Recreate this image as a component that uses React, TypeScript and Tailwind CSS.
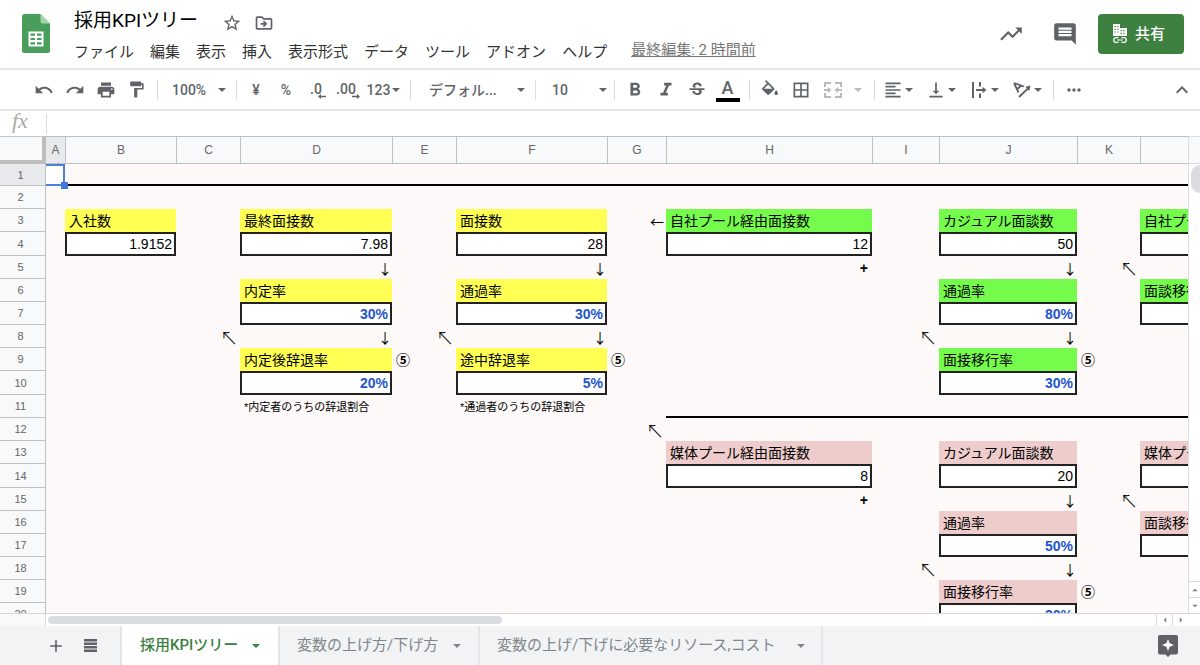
import type { ReactNode } from 'react';
import { clsx } from 'clsx';
import {
    MdAdd,
    MdBorderAll,
    MdExpandLess,
    MdFormatAlignLeft,
    MdFormatBold,
    MdFormatItalic,
    MdFormatPaint,
    MdInsertComment,
    MdMoreHoriz,
    MdOutlineDriveFileMove,
    MdPrint,
    MdRedo,
    MdStarBorder,
    MdStrikethroughS,
    MdTrendingUp,
    MdUndo,
    MdVerticalAlignBottom,
} from 'react-icons/md';

type Kind = 'yellow' | 'green' | 'pink' | 'value' | 'rate' | 'down' | 'left' | 'diagonal' | 'plus' | 'badge' | 'note';

interface Cell {
    text: string;
    kind: Kind;
}

const MENUS = ['ファイル', '編集', '表示', '挿入', '表示形式', 'データ', 'ツール', 'アドオン', 'ヘルプ'];

const COLUMNS = [
    { name: 'A', width: 'w-[19px]' },
    { name: 'B', width: 'w-[111px]' },
    { name: 'C', width: 'w-[64px]' },
    { name: 'D', width: 'w-[152px]' },
    { name: 'E', width: 'w-[64px]' },
    { name: 'F', width: 'w-[151px]' },
    { name: 'G', width: 'w-[59px]' },
    { name: 'H', width: 'w-[206px]' },
    { name: 'I', width: 'w-[67px]' },
    { name: 'J', width: 'w-[138px]' },
    { name: 'K', width: 'w-[63px]' },
    { name: 'L', width: 'w-[206px]' },
];

const ROWS = Array.from({ length: 20 }, (_, i) => i + 1);
const TALL_ROWS = [4, 10, 14];

const CELLS: Record<string, Cell> = {
    B3: { text: '入社数', kind: 'yellow' },
    B4: { text: '1.9152', kind: 'value' },
    D3: { text: '最終面接数', kind: 'yellow' },
    D4: { text: '7.98', kind: 'value' },
    D5: { text: '↓', kind: 'down' },
    D6: { text: '内定率', kind: 'yellow' },
    D7: { text: '30%', kind: 'rate' },
    C8: { text: '↖', kind: 'diagonal' },
    D8: { text: '↓', kind: 'down' },
    D9: { text: '内定後辞退率', kind: 'yellow' },
    E9: { text: '⑤', kind: 'badge' },
    D10: { text: '20%', kind: 'rate' },
    D11: { text: '*内定者のうちの辞退割合', kind: 'note' },
    F3: { text: '面接数', kind: 'yellow' },
    F4: { text: '28', kind: 'value' },
    F5: { text: '↓', kind: 'down' },
    F6: { text: '通過率', kind: 'yellow' },
    F7: { text: '30%', kind: 'rate' },
    E8: { text: '↖', kind: 'diagonal' },
    F8: { text: '↓', kind: 'down' },
    F9: { text: '途中辞退率', kind: 'yellow' },
    G9: { text: '⑤', kind: 'badge' },
    F10: { text: '5%', kind: 'rate' },
    F11: { text: '*通過者のうちの辞退割合', kind: 'note' },
    G3: { text: '←', kind: 'left' },
    H3: { text: '自社プール経由面接数', kind: 'green' },
    H4: { text: '12', kind: 'value' },
    H5: { text: '+', kind: 'plus' },
    J3: { text: 'カジュアル面談数', kind: 'green' },
    J4: { text: '50', kind: 'value' },
    J5: { text: '↓', kind: 'down' },
    J6: { text: '通過率', kind: 'green' },
    J7: { text: '80%', kind: 'rate' },
    I8: { text: '↖', kind: 'diagonal' },
    J8: { text: '↓', kind: 'down' },
    J9: { text: '面接移行率', kind: 'green' },
    K9: { text: '⑤', kind: 'badge' },
    J10: { text: '30%', kind: 'rate' },
    L3: { text: '自社プール経由面談数', kind: 'green' },
    L4: { text: '', kind: 'value' },
    K5: { text: '↖', kind: 'diagonal' },
    L6: { text: '面談移行率', kind: 'green' },
    L7: { text: '', kind: 'rate' },
    G12: { text: '↖', kind: 'diagonal' },
    H13: { text: '媒体プール経由面接数', kind: 'pink' },
    H14: { text: '8', kind: 'value' },
    H15: { text: '+', kind: 'plus' },
    J13: { text: 'カジュアル面談数', kind: 'pink' },
    J14: { text: '20', kind: 'value' },
    J15: { text: '↓', kind: 'down' },
    J16: { text: '通過率', kind: 'pink' },
    J17: { text: '50%', kind: 'rate' },
    I18: { text: '↖', kind: 'diagonal' },
    J18: { text: '↓', kind: 'down' },
    J19: { text: '面接移行率', kind: 'pink' },
    K19: { text: '⑤', kind: 'badge' },
    J20: { text: '30%', kind: 'rate' },
    L13: { text: '媒体プール経由面談数', kind: 'pink' },
    L14: { text: '', kind: 'value' },
    K15: { text: '↖', kind: 'diagonal' },
    L16: { text: '面談移行率', kind: 'pink' },
    L17: { text: '', kind: 'rate' },
};

const KIND_STYLES: Record<Kind, string> = {
    yellow: 'bg-[#ffff54] pl-1',
    green: 'bg-[#75fb4c] pl-1',
    pink: 'bg-[#eecccb] pl-1',
    value: 'bg-white border-2 border-[#222] pr-[2px] text-right',
    rate: 'bg-white border-2 border-[#222] pr-[2px] text-right font-bold text-[#1f55cc]',
    down: "text-right font-['Noto_Sans_CJK_JP',sans-serif]",
    left: "pr-[2px] text-right font-['Noto_Sans_CJK_JP',sans-serif]",
    diagonal: "pr-[2px] text-right font-['Noto_Sans_CJK_JP',sans-serif] text-lg font-light leading-4",
    plus: 'pr-1 text-right font-bold',
    badge: 'pl-1 font-bold',
    note: 'pl-1 text-[11px]',
};

const Caret = ({ className = '' }: { className?: string }) => (
    <svg viewBox="0 0 8 4" className={clsx('h-1 w-2 shrink-0 fill-current', className)} aria-hidden="true">
        <path d="M0 0h8L4 4z" />
    </svg>
);

const Separator = ({ className = '' }: { className?: string }) => (
    <div className={clsx('h-5 w-px shrink-0 bg-[#dadce0]', className)} />
);

interface ToolProps {
    label: string;
    className?: string;
    children: ReactNode;
}

const Tool = ({ label, className = 'w-[31px]', children }: ToolProps) => (
    <button
        type="button"
        aria-label={label}
        title={label}
        className={clsx('flex h-7 shrink-0 items-center justify-center', className)}
    >
        {children}
    </button>
);

const MenuTool = ({ label, children }: { label: string; children: ReactNode }) => (
    <button type="button" aria-label={label} title={label} className="flex h-7 w-[43px] shrink-0 items-center">
        <span className="flex w-7 justify-end">
            <span className="flex w-6 justify-center">{children}</span>
        </span>
        <Caret />
    </button>
);

interface ToolSelectProps {
    label: string;
    value: string;
    className: string;
}

const ToolSelect = ({ label, value, className }: ToolSelectProps) => (
    <label className={clsx('flex shrink-0 items-center', className)}>
        <select aria-label={label} defaultValue={value} className="min-w-0 flex-1 appearance-none bg-transparent font-medium outline-none">
            <option>{value}</option>
        </select>
        <Caret />
    </label>
);

const SheetsLogo = () => (
    <svg viewBox="0 0 28 39" className="h-[39px] w-7 shrink-0" role="img" aria-label="スプレッドシート">
        <path d="M2.500 0H18.500L28 9.500V36.500A2.500 2.500 0 0 1 25.500 39H2.500A2.500 2.500 0 0 1 0 36.500V2.500A2.500 2.500 0 0 1 2.500 0z" fill="#4a9e5c" />
        <path d="M18.500 0L28 9.500H20.500a2 2 0 0 1-2-2z" fill="#a5d3ae" />
        <path d="M6.500 17.500h15v15h-15z" fill="#fff" />
        <path d="M8.500 19.500h4.500v2.200h-4.500zM15 19.500h4.500v2.200h-4.500zM8.500 23.900h4.500v2.200h-4.500zM15 23.900h4.500v2.200h-4.500zM8.500 28.300h4.500v2.200h-4.500zM15 28.300h4.500v2.200h-4.500z" fill="#4a9e5c" />
    </svg>
);

const ShareIcon = () => (
    <svg viewBox="0 0 16 20" className="h-5 w-4" aria-hidden="true">
        <path d="M1 0h7v4h7v8H1z" fill="#fff" />
        <path d="M2.500 2h1.200v1.200H2.500zM5.300 2h1.200v1.200H5.300zM2.500 4.700h1.200v1.200H2.500zM5.300 4.700h1.200v1.200H5.300zM2.500 7.400h1.200v1.200H2.500zM5.300 7.400h1.200v1.200H5.300zM8.500 6h1.200v1.200H8.500zM11.300 6h1.200v1.200h-1.200zM8.500 8.700h1.200v1.200H8.500zM11.300 8.700h1.200v1.200h-1.200z" fill="#3d8040" />
        <path d="M6.500 13.700H4a2.300 2.300 0 0 0 0 4.600h2.500M9.500 13.700H12a2.300 2.300 0 0 1 0 4.600H9.500M5 16h6" fill="none" stroke="#fff" strokeWidth="1.200" />
    </svg>
);

const FillIcon = () => (
    <svg viewBox="3 0 18 17" className="h-[15px] w-4 fill-current" aria-hidden="true">
        <path d="M16.560 8.940L7.620 0 6.210 1.410l2.380 2.380-5.150 5.150a1.490 1.490 0 0 0 0 2.120l5.500 5.500c.29.29.68.44 1.060.44s.77-.15 1.060-.44l5.500-5.500c.59-.58.59-1.530 0-2.120zM5.210 10L10 5.210 14.790 10H5.210zM19 11.500s-2 2.170-2 3.500c0 1.100.9 2 2 2s2-.9 2-2c0-1.330-2-3.500-2-3.500z" />
    </svg>
);

const MergeIcon = () => (
    <svg viewBox="0 0 18 16" className="h-4 w-[18px]" fill="none" stroke="currentColor" strokeWidth="2" aria-hidden="true">
        <path d="M1 5V1h6M11 1h6v4M1 11v4h6M11 15h6v-4M0 8h5M18 8h-5" />
        <path d="M4 5l3.500 3L4 11zM14 5l-3.500 3 3.500 3z" fill="currentColor" stroke="none" />
    </svg>
);

const WrapIcon = () => (
    <svg viewBox="0 0 16 16" className="h-4 w-4" fill="none" stroke="currentColor" strokeWidth="2" aria-hidden="true">
        <path d="M2 0v16M9 0v4.500M9 11.500v4.500M5 8h8" />
        <path d="M11.500 4.800L15.500 8l-4 3.200z" fill="currentColor" stroke="none" />
    </svg>
);

const RotateIcon = () => (
    <svg viewBox="0 0 18 16" className="h-4 w-[18px]" fill="none" stroke="currentColor" strokeWidth="1.800" aria-hidden="true">
        <path d="M1 1l10 3.500M1 1l4.500 9.500M8.300 3.500L3.800 7.500M6 15l9-8.500" />
        <path d="M17.500 3.500l-5.200 1.200 4 4.300z" fill="currentColor" stroke="none" />
    </svg>
);

const DecimalIcon = ({ digits, increase = false }: { digits: string; increase?: boolean }) => (
    <span className="flex flex-col items-center text-sm font-medium leading-4">
        {digits}
        <svg
            viewBox="0 0 8 5"
            className={clsx('-mt-[3px] -mr-1 h-[5px] w-2 self-end', increase && 'rotate-180')}
            aria-hidden="true"
        >
            <path d="M0 2.500L3 0v1.700h5v1.600H3V5z" fill="currentColor" />
        </svg>
    </span>
);

const TitleBar = () => (
    <header className="flex h-[70px] shrink-0 items-start border-b-2 border-[#e6e7ea] pl-[22px] pr-4 pt-[14px]">
        <SheetsLogo />
        <div className="-mt-[7px] ml-6">
            <div className="flex h-7 items-center">
                <h1 className="text-[19px] leading-7 text-black">採用KPIツリー</h1>
                <button type="button" aria-label="スターを付ける" className="ml-6 mt-1">
                    <MdStarBorder className="size-5" />
                </button>
                <button type="button" aria-label="移動" className="ml-3 mt-1">
                    <MdOutlineDriveFileMove className="size-5" />
                </button>
            </div>
            <nav className="mt-[5px] flex gap-4 whitespace-nowrap text-[15px] leading-6 text-[#333]">
                {MENUS.map((menu) => (
                    <button key={menu} type="button">
                        {menu}
                    </button>
                ))}
                <a href="#history" className="-mt-[2px] ml-2 text-[#777] underline">
                    最終編集: 2 時間前
                </a>
            </nav>
        </div>
        <div className="ml-auto flex h-10 items-center">
            <button type="button" aria-label="アクティビティ">
                <MdTrendingUp className="size-[26px]" />
            </button>
            <button type="button" aria-label="コメント" className="ml-7">
                <MdInsertComment className="size-[26px]" />
            </button>
            <button
                type="button"
                className="ml-5 flex h-10 w-[86px] items-center gap-[7px] rounded-sm bg-[#3d8040] pl-[14px] text-[15px] font-medium text-white"
            >
                <ShareIcon />
                共有
            </button>
        </div>
    </header>
);

const Toolbar = () => (
    <div className="flex h-[41px] shrink-0 items-center border-b-2 border-[#e6e7ea] pl-7 pr-[3px] text-sm">
        <Tool label="元に戻す"><MdUndo className="size-5" /></Tool>
        <Tool label="やり直し"><MdRedo className="size-5" /></Tool>
        <Tool label="印刷"><MdPrint className="size-5" /></Tool>
        <Tool label="書式を貼り付け"><MdFormatPaint className="size-[19px]" /></Tool>
        <Separator className="ml-[5px]" />
        <ToolSelect label="ズーム" value="100%" className="w-[78px] pl-[14px] pr-[10px]" />
        <Separator />
        <Tool label="通貨" className="ml-1 w-[30px] font-medium">¥</Tool>
        <Tool label="パーセント" className="w-[30px] font-medium">%</Tool>
        <Tool label="小数点以下の桁数を減らす" className="w-[30px]"><DecimalIcon digits=".0" /></Tool>
        <Tool label="小数点以下の桁数を増やす" className="w-[30px]"><DecimalIcon digits=".00" increase /></Tool>
        <Tool label="表示形式の詳細" className="w-[45px] gap-[2px] font-medium">123<Caret /></Tool>
        <Separator className="ml-1" />
        <ToolSelect label="フォント" value="デフォル..." className="w-[124px] pl-[18px] pr-[10px]" />
        <Separator />
        <ToolSelect label="フォントサイズ" value="10" className="w-[78px] pl-4 pr-[7px]" />
        <Separator />
        <Tool label="太字" className="ml-1 w-[31px]"><MdFormatBold className="size-[22px]" /></Tool>
        <Tool label="斜体"><MdFormatItalic className="size-[22px]" /></Tool>
        <Tool label="取り消し線"><MdStrikethroughS className="size-5" /></Tool>
        <Tool label="テキストの色">
            <span className="flex flex-col items-center text-lg font-medium leading-5">
                A
                <span className="h-1 w-6 bg-black" />
            </span>
        </Tool>
        <Separator className="ml-[6px]" />
        <Tool label="塗りつぶしの色" className="ml-1 w-[31px] pb-1"><FillIcon /></Tool>
        <Tool label="枠線"><MdBorderAll className="size-5" /></Tool>
        <Tool label="セルを結合" className="w-[33px] text-[#bbb]"><MergeIcon /></Tool>
        <Tool label="結合の種類" className="w-[18px] text-[#bbb]"><Caret /></Tool>
        <Separator className="ml-[7px] mr-[2px]" />
        <MenuTool label="水平方向の配置"><MdFormatAlignLeft className="size-5" /></MenuTool>
        <MenuTool label="垂直方向の配置"><MdVerticalAlignBottom className="size-5" /></MenuTool>
        <MenuTool label="テキストを折り返す"><WrapIcon /></MenuTool>
        <MenuTool label="テキストの回転"><RotateIcon /></MenuTool>
        <Separator className="ml-1 mr-1" />
        <Tool label="もっと見る"><MdMoreHoriz className="size-5" /></Tool>
        <Tool label="メニューを非表示" className="ml-auto w-[30px]"><MdExpandLess className="size-6" /></Tool>
    </div>
);

const FormulaBar = () => (
    <label className="flex h-[25px] shrink-0 items-center">
        <span className="w-[46px] self-start pl-3 font-['Liberation_Serif',serif] text-[22px] italic leading-5 text-[#aaa]">fx</span>
        <Separator className="bg-[#c0c0c0]" />
        <input type="text" aria-label="数式" className="h-5 min-w-0 flex-1 px-2 outline-none" />
    </label>
);

const GridCell = ({ column, row }: { column: string; row: number }) => {
    const cell = CELLS[`${column}${row}`];

    if (column === 'A' && row === 1) {
        return (
            <td className="relative border-2 border-l-0 border-[#4a7fdc] bg-white">
                <span className="absolute -bottom-[5px] -right-[5px] z-10 size-[7px] bg-[#3f78dc]" />
            </td>
        );
    }

    return (
        <td
            className={clsx(
                'overflow-hidden whitespace-nowrap p-0',
                cell && KIND_STYLES[cell.kind],
                row === 1 && 'border-b-2 border-black',
                row === 11 && column >= 'H' && 'border-b-2 border-black',
            )}
        >
            {cell?.text}
        </td>
    );
};

const Grid = () => (
    <div className="min-w-0 flex-1 overflow-hidden">
        <table className="w-[1346px] table-fixed border-separate border-spacing-0 bg-[#fcf9f8] font-['Liberation_Sans','Noto_Sans_CJK_JP',sans-serif] text-sm leading-4 text-black">
            <colgroup>
                <col className="w-[46px]" />
                {COLUMNS.map((column) => (
                    <col key={column.name} className={column.width} />
                ))}
            </colgroup>
            <thead>
                <tr className="h-7 text-xs text-[#666]">
                    <th className="border-b-4 border-r-4 border-t border-[#bdbdbd] border-t-[#c4c6c8] bg-[#f8f9fa] p-0" />
                    {COLUMNS.map((column) => (
                        <th
                            key={column.name}
                            scope="col"
                            className={clsx(
                                'border-b border-t border-[#c0c0c0] p-0 font-normal',
                                column.name === 'A' ? 'bg-[#e7e9ec]' : 'border-l bg-[#f8f9fa]',
                            )}
                        >
                            {column.name}
                        </th>
                    ))}
                </tr>
            </thead>
            <tbody>
                {ROWS.map((row) => (
                    <tr key={row} className={row === 1 ? 'h-[22px]' : TALL_ROWS.includes(row) ? 'h-6' : 'h-[23px]'}>
                        <th
                            scope="row"
                            className={clsx(
                                'border-b border-r border-[#c0c0c0] p-0 pr-1 text-[11px] font-normal text-[#666]',
                                row === 1 ? 'bg-[#e7e9ec]' : 'bg-[#f8f9fa]',
                            )}
                        >
                            {row}
                        </th>
                        {COLUMNS.map((column) => (
                            <GridCell key={column.name} column={column.name} row={row} />
                        ))}
                    </tr>
                ))}
            </tbody>
        </table>
    </div>
);

const VerticalScrollbar = () => (
    <div className="flex w-[12px] shrink-0 flex-col border-l border-[#dadce0] bg-white text-[#888]">
        <div className="h-7 border-y border-[#dadce0] bg-[#f8f9fa]" />
        <div className="ml-[2px] mt-px h-7 rounded-l-full rounded-r bg-[#dadce0]" />
        <button type="button" aria-label="上へ" className="mt-auto flex h-4 items-center justify-center border-t border-[#dadce0]">
            <Caret className="rotate-180 scale-75" />
        </button>
        <button type="button" aria-label="下へ" className="flex h-4 items-center justify-center border-t border-[#dadce0]">
            <Caret className="scale-75" />
        </button>
    </div>
);

const HorizontalScrollbar = () => (
    <div className="flex h-[13px] shrink-0 border-t border-[#d5d6d8] bg-white pr-[12px] text-[#888]">
        <div className="w-[46px] border-r border-[#dadce0] bg-[#f8f9fa]" />
        <div className="flex flex-1 items-center pl-[2px]">
            <div className="h-2 w-[41%] rounded-full bg-[#dadce0]" />
        </div>
        <button type="button" aria-label="左へ" className="flex w-4 items-center justify-center border-l border-[#dadce0]">
            <Caret className="rotate-90 scale-75" />
        </button>
        <button type="button" aria-label="右へ" className="flex w-4 items-center justify-center border-l border-[#dadce0]">
            <Caret className="-rotate-90 scale-75" />
        </button>
    </div>
);

const SheetTab = ({ name, className, active = false }: { name: string; className: string; active?: boolean }) => (
    <button
        type="button"
        aria-pressed={active}
        className={clsx(
            'flex shrink-0 items-center justify-between whitespace-nowrap border-r-2 border-[#e3e5e8] text-[15px]',
            active ? 'border-l-2 bg-white font-medium text-[#3b8040]' : 'text-[#80868b]',
            className,
        )}
    >
        {name}
        <Caret />
    </button>
);

const SheetTabs = () => (
    <footer className="flex h-[39px] shrink-0 bg-[#f1f3f4]">
        <button type="button" aria-label="シートを追加" className="ml-[46px] flex w-5 items-center justify-center">
            <MdAdd className="size-5" />
        </button>
        <button type="button" aria-label="すべてのシート" className="ml-[14px] mr-[20px] flex w-5 items-center justify-center">
            <svg viewBox="0 0 13 13" className="size-[13px] fill-current" aria-hidden="true">
                <path d="M0 0h13v2.400H0zM0 3.500h13v2.400H0zM0 7h13v2.400H0zM0 10.500h13v2.400H0z" />
            </svg>
        </button>
        <SheetTab name="採用KPIツリー" className="w-[160px] pl-[18px] pr-[18px]" active />
        <SheetTab name="変数の上げ方/下げ方" className="w-[200px] pl-[17px] pr-[17px]" />
        <SheetTab name="変数の上げ/下げに必要なリソース,コスト" className="w-[343px] pl-[17px] pr-4" />
        <button type="button" aria-label="データ探索" className="ml-auto mr-[22px] flex items-center">
            <svg viewBox="0 0 20 22" className="h-[22px] w-5" aria-hidden="true">
                <path d="M2 0h16a2 2 0 0 1 2 2v15.500a2 2 0 0 1-2 2h-5.500L10 22l-2.500-2.500H2a2 2 0 0 1-2-2V2a2 2 0 0 1 2-2z" fill="#5f6164" />
                <path d="M10 4l1.700 4.300L16 10l-4.300 1.700L10 16l-1.700-4.300L4 10l4.300-1.700z" fill="#fff" />
            </svg>
        </button>
    </footer>
);

export default function App() {
    return (
        <div className="flex h-screen flex-col overflow-hidden bg-white font-[Roboto,'Noto_Sans_CJK_JP',sans-serif] text-[#5f6368]">
            <TitleBar />
            <Toolbar />
            <FormulaBar />
            <main className="flex min-h-0 flex-1">
                <Grid />
                <VerticalScrollbar />
            </main>
            <HorizontalScrollbar />
            <SheetTabs />
        </div>
    );
}
